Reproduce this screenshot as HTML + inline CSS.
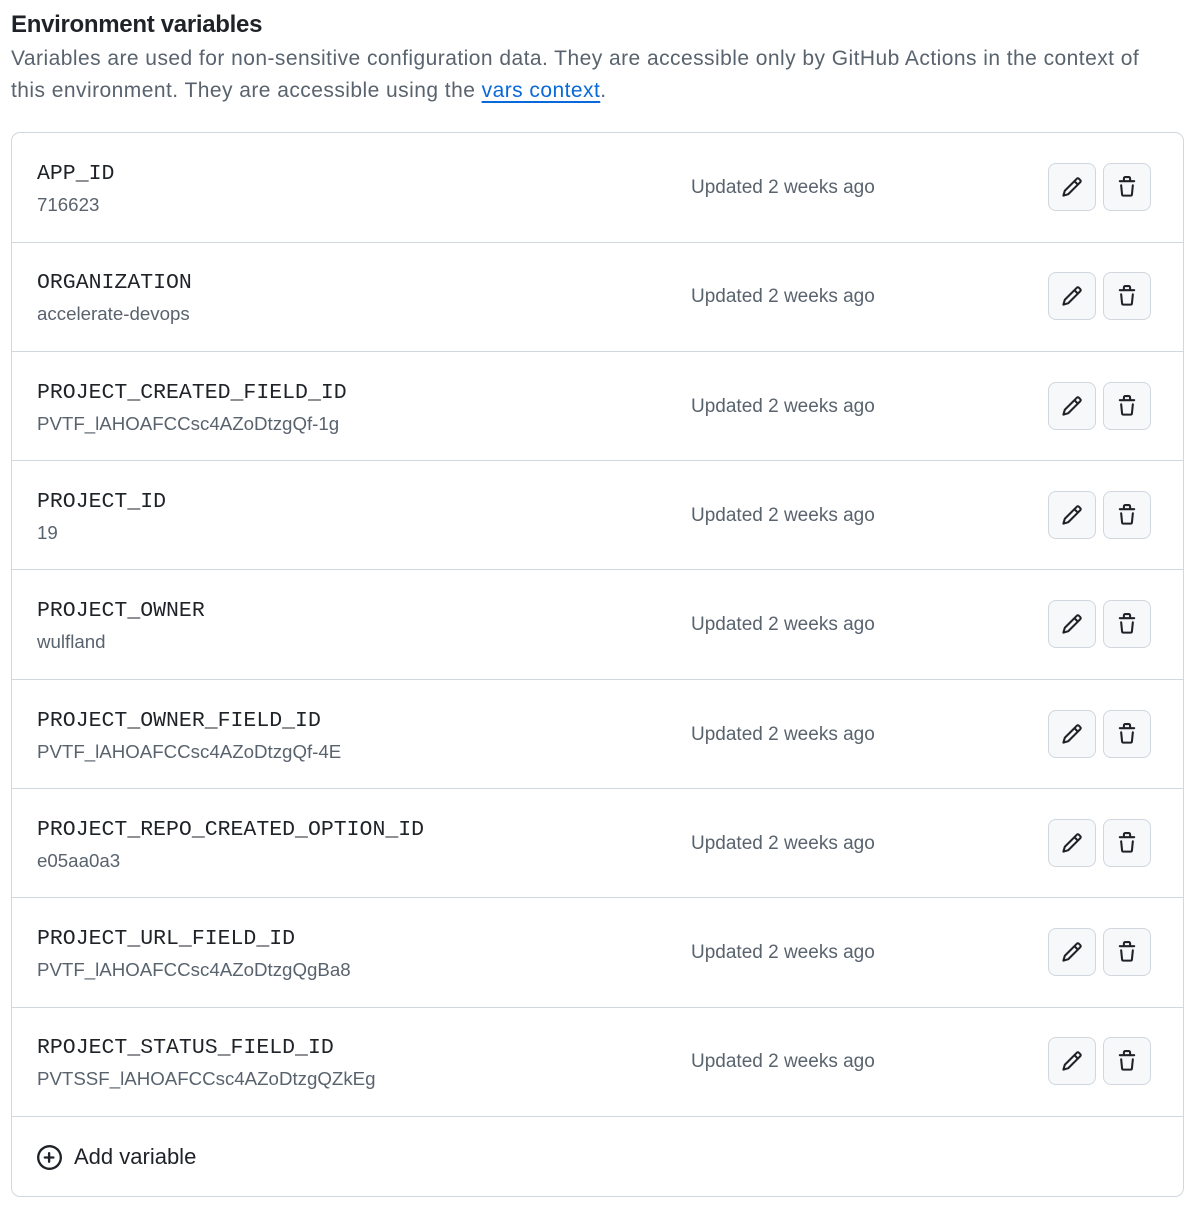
<!DOCTYPE html>
<html><head><meta charset="utf-8"><style>
*{box-sizing:border-box;margin:0;padding:0}
body{width:1198px;height:1210px;background:#fff;font-family:"Liberation Sans",sans-serif;color:#1f2328;overflow:hidden}
h2{position:absolute;left:11px;top:11px;font-size:24px;font-weight:bold;letter-spacing:-0.3px}
.desc{position:absolute;left:11px;top:43px;width:1165px;font-size:21px;letter-spacing:0.45px;line-height:32px;color:#59636e}
.desc a{color:#0969da;text-decoration:underline;text-underline-offset:4px}
.box{position:absolute;left:11px;top:132px;width:1173px;height:1065px;border:1.5px solid #d0d7de;border-radius:9px}
.row{position:absolute;left:0;right:0;height:109.5px;border-bottom:1.5px solid #d0d7de}
.name{position:absolute;left:25px;top:29px;font-family:"Liberation Mono",monospace;font-size:21.5px}
.val{position:absolute;left:25px;top:61px;font-size:18.7px;color:#59636e}
.upd{position:absolute;left:679px;top:44px;font-size:19px;color:#59636e}
.btn{position:absolute;top:30px;width:48px;height:48px;border:1.5px solid #d0d7de;border-radius:8px;background:#f6f8fa;display:flex;align-items:center;justify-content:center}
.add{position:absolute;left:25px;font-size:22px;color:#1f2328;display:flex;align-items:center;gap:12px}
</style></head><body>
<h2>Environment variables</h2>
<div class="desc">Variables are used for non-sensitive configuration data. They are accessible only by GitHub Actions in the context of this environment. They are accessible using the <a>vars context</a>.</div>
<div class="box" id="box"></div>
<script>
var d=[["APP_ID","716623"],["ORGANIZATION","accelerate-devops"],["PROJECT_CREATED_FIELD_ID","PVTF_lAHOAFCCsc4AZoDtzgQf-1g"],["PROJECT_ID","19"],["PROJECT_OWNER","wulfland"],["PROJECT_OWNER_FIELD_ID","PVTF_lAHOAFCCsc4AZoDtzgQf-4E"],["PROJECT_REPO_CREATED_OPTION_ID","e05aa0a3"],["PROJECT_URL_FIELD_ID","PVTF_lAHOAFCCsc4AZoDtzgQgBa8"],["RPOJECT_STATUS_FIELD_ID","PVTSSF_lAHOAFCCsc4AZoDtzgQZkEg"]];
var pen='<svg width="22" height="22" viewBox="0 0 16 16"><path d="M11.013 1.427a1.75 1.75 0 0 1 2.474 0l1.086 1.086a1.75 1.75 0 0 1 0 2.474l-8.61 8.61c-.21.21-.47.364-.756.445l-3.251.93a.75.75 0 0 1-.927-.928l.929-3.25c.081-.286.235-.547.445-.758l8.61-8.61Zm.176 4.823L9.75 4.81l-6.286 6.287a.253.253 0 0 0-.064.108l-.558 1.953 1.953-.558a.253.253 0 0 0 .108-.064Zm1.238-3.763a.25.25 0 0 0-.354 0L10.811 3.750l1.439 1.44 1.263-1.263a.25.25 0 0 0 0-.354Z" fill="#1f2328"/></svg>';
var trash='<svg width="22" height="22" viewBox="0 0 16 16"><path d="M11 1.75V3h2.25a.75.75 0 0 1 0 1.5H2.75a.75.75 0 0 1 0-1.5H5V1.75C5 .784 5.784 0 6.75 0h2.5C10.216 0 11 .784 11 1.75ZM4.496 6.675l.66 6.6a.25.25 0 0 0 .249.225h5.19a.25.25 0 0 0 .249-.225l.66-6.6a.75.75 0 0 1 1.492.149l-.66 6.6A1.748 1.748 0 0 1 10.595 15h-5.19a1.75 1.75 0 0 1-1.741-1.575l-.66-6.6a.75.75 0 1 1 1.492-.15ZM6.5 1.75V3h3V1.75a.25.25 0 0 0-.25-.25h-2.5a.25.25 0 0 0-.25.25Z" fill="#1f2328"/></svg>';
var h='';
d.forEach(function(r,i){h+='<div class="row" style="top:'+(i*109.3)+'px"><div class="name">'+r[0]+'</div><div class="val">'+r[1]+'</div><div class="upd">Updated 2 weeks ago</div><div class="btn" style="left:1036px">'+pen+'</div><div class="btn" style="left:1091px">'+trash+'</div></div>';});
h+='<div class="add" style="top:1011px"><svg width="25" height="25" viewBox="0 0 16 16"><path d="M7.75 4.5a.75.75 0 0 1 .75.75V7.25h2a.75.75 0 0 1 0 1.5h-2v2a.75.75 0 0 1-1.5 0v-2h-2a.75.75 0 0 1 0-1.5h2v-2a.75.75 0 0 1 .75-.75ZM8 0a8 8 0 1 1 0 16A8 8 0 0 1 8 0ZM1.5 8a6.5 6.5 0 1 0 13 0 6.5 6.5 0 0 0-13 0Z" fill="#1f2328"/></svg>Add variable</div>';
document.getElementById('box').innerHTML=h;
</script>
</body></html>
